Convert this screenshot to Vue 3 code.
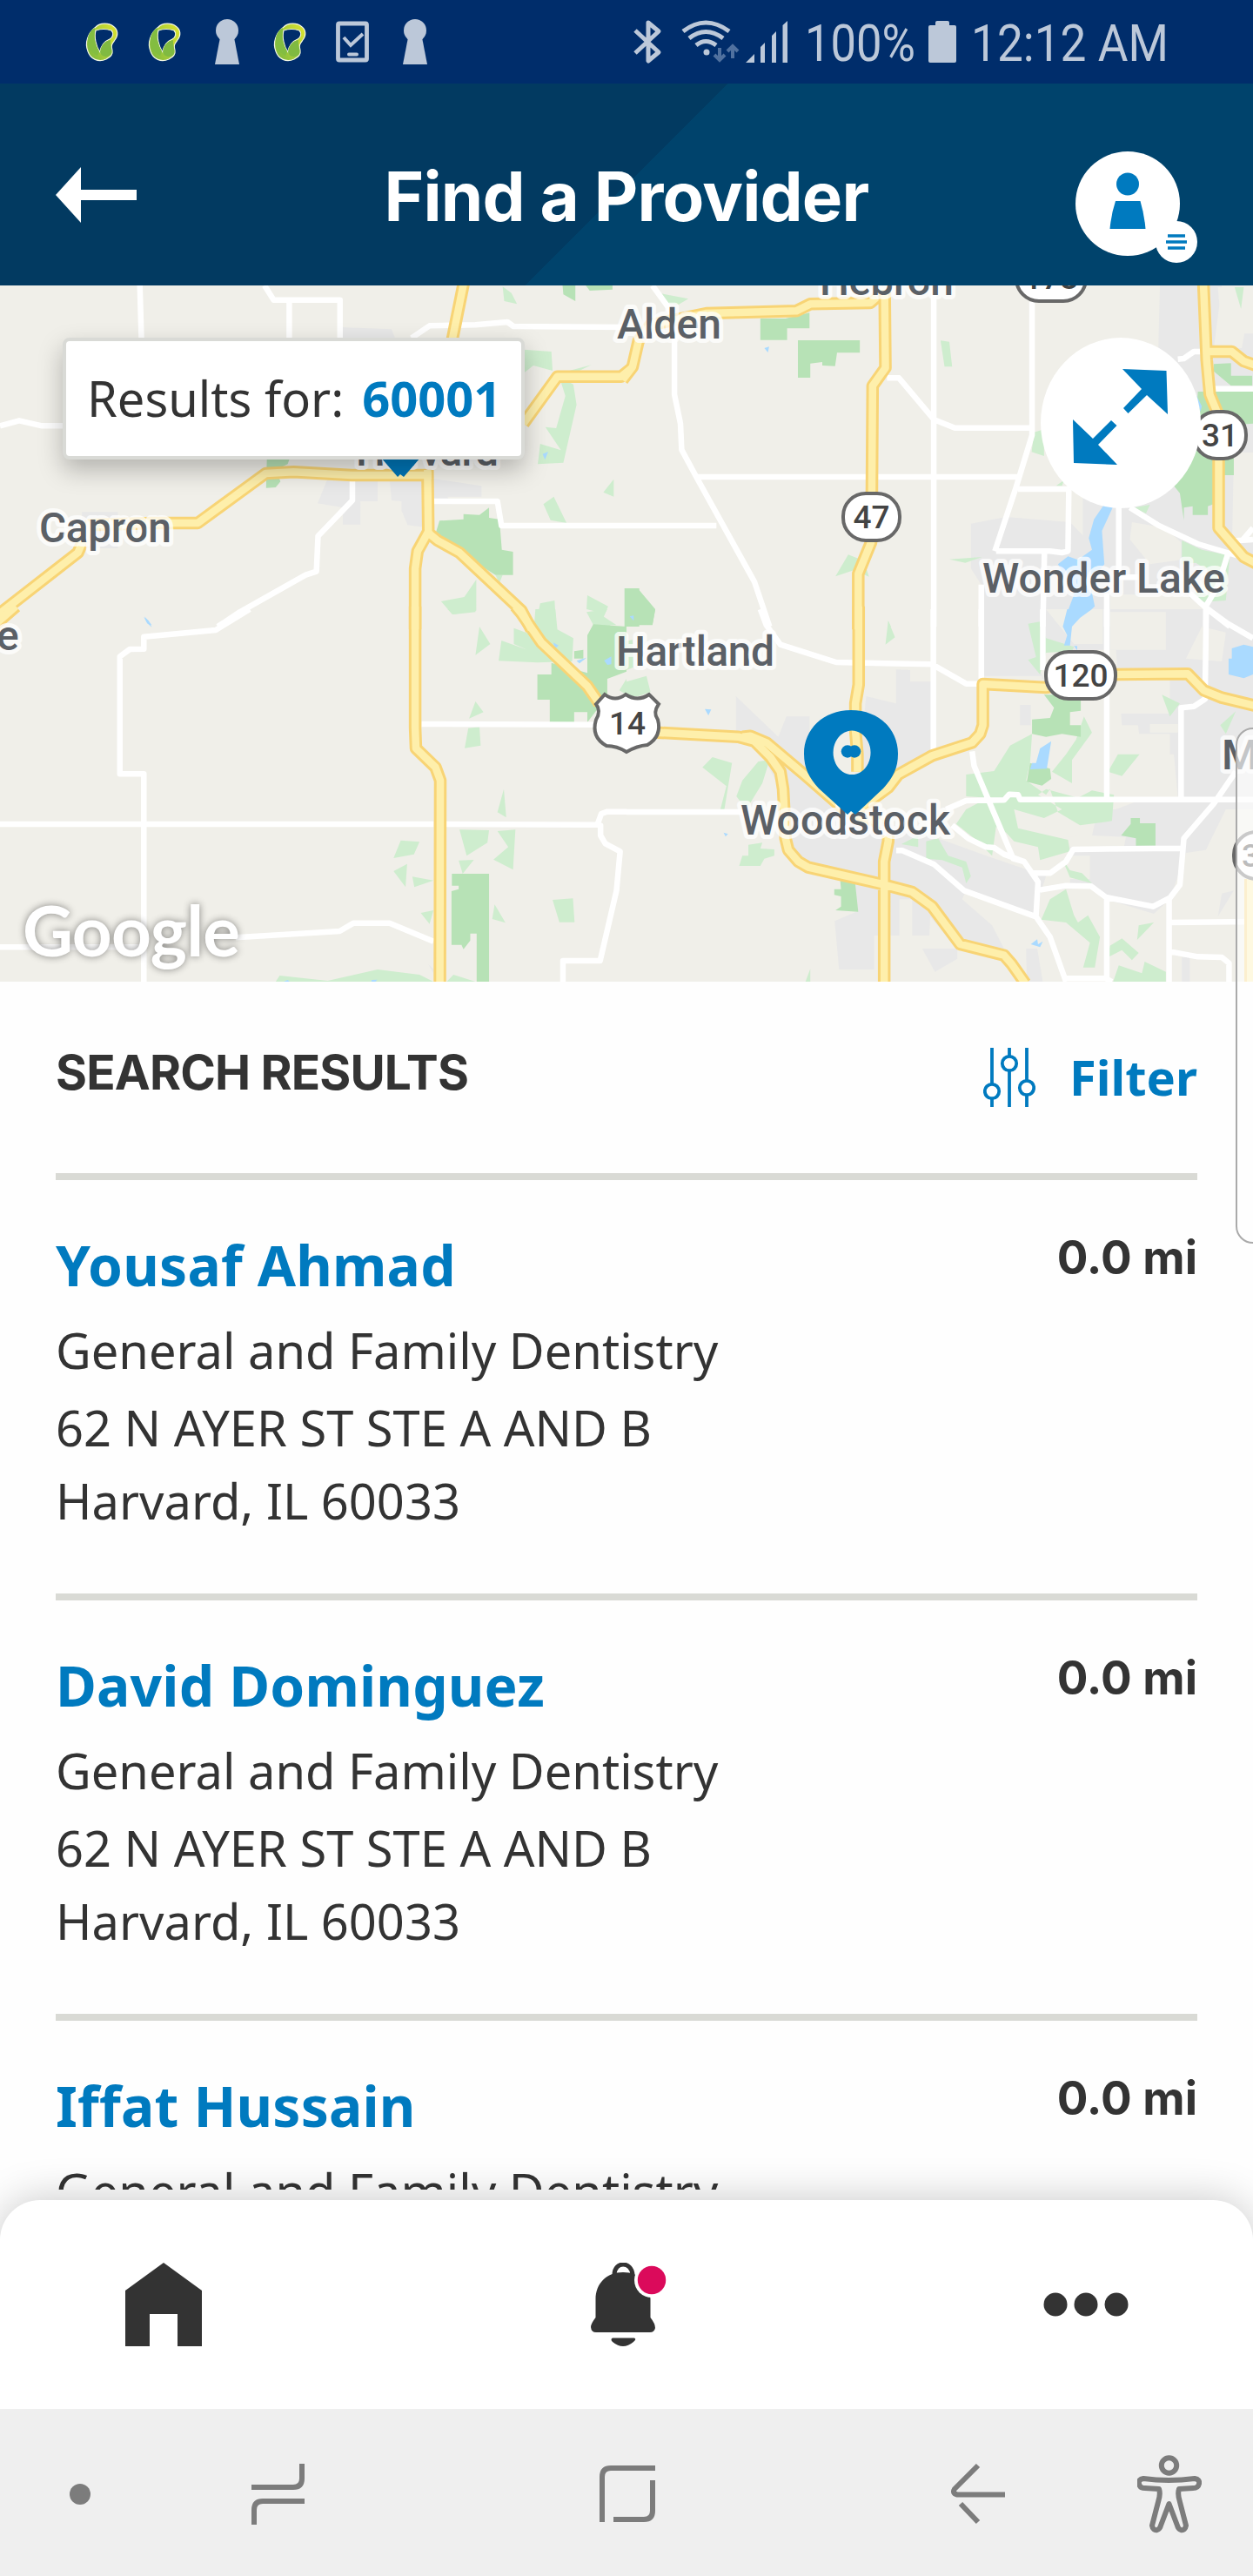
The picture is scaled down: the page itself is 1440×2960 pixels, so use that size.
<script setup>
const providers = [
  { name: 'Yousaf Ahmad', specialty: 'General and Family Dentistry', street: '62 N AYER ST STE A AND B', city: 'Harvard, IL 60033', distance: '0.0 mi' },
  { name: 'David Dominguez', specialty: 'General and Family Dentistry', street: '62 N AYER ST STE A AND B', city: 'Harvard, IL 60033', distance: '0.0 mi' },
  { name: 'Iffat Hussain', specialty: 'General and Family Dentistry', street: '62 N AYER ST STE A AND B', city: 'Harvard, IL 60033', distance: '0.0 mi' },
]

const statusIcons = ['leaf', 'leaf', 'keyhole', 'leaf', 'phone', 'keyhole']

// Each tile keeps its own coordinate space and is scaled into the map.
const tile = (x, y) => `translate(${x} ${y}) scale(0.45918 0.33333)`

const tiles = [
  {
    at: tile(0, 320),
    urban: 'M855 168L980 175L990 210L855 210ZM820 690L945 690V768H902V848H858V790L795 775ZM975 690H1085L1205 715V752L1120 752L1130 778H1085L1065 858L1020 850L1005 800V768L980 765ZM205 805H295V930H205Z',
    park: 'M1408 24H1440V78L1410 55ZM1466 24H1533V38L1476 42ZM668 620H725L720 640L690 660L702 700L690 720L666 722ZM1100 835L1160 830V812L1200 815L1224 790V825L1250 830L1256 935L1284 942V1022H1240L1180 970L1140 920L1090 880ZM1563 1068H1600V1200H1563Z',
    light: 'M1258 28L1280 50L1294 88L1262 78ZM1310 245L1380 252L1383 318L1335 300L1312 325ZM1400 340L1435 365L1443 435L1410 635L1346 640L1352 570L1404 592L1365 512L1392 516L1415 405ZM1425 318L1480 298L1440 325ZM1386 752L1418 843L1378 833L1360 778ZM1536 692V752L1510 737ZM1104 1113L1162 1098L1192 1038V1145L1132 1158ZM1240 1022H1258L1250 1050ZM1352 1120L1388 1110L1392 1200H1340ZM1470 1092L1522 1130L1510 1170L1530 1200H1490L1496 1150L1468 1140ZM1162 890L1190 893V935L1162 930ZM1193 953H1224V978H1193Z',
    water: 'M1358 605L1372 597L1364 625ZM362 1165L380 1195L370 1190Z',
    minor: 'M350 24L354 210M662 24L685 74H851V210M724 74V210M1030 205L1075 163L1190 160L1270 150L1285 165L1568 168M0 508L48 490L105 508H160M882 695V765L796 888L792 1010L765 1022L600 1150L545 1200M1075 768H1245L1255 852H1568',
    major: 'M1160 20L1132 210M-10 1165L195 945L225 850L380 843H495L665 672L735 667L880 678H1080M1070 660L1072 870M1075 865L1045 940L1039 1000V1210M1070 875L1095 903L1150 945L1305 1145L1330 1210M1310 500L1395 338H1555L1580 310',
  },
  {
    at: tile(720, 320),
    urban: 'M1335 24H1568V900H1362L1330 700V300ZM862 845L950 822L1110 840L1142 885V750L1180 735H1568V1200H890V1060L862 1000Z',
    plain: 'M1490 24H1568L1540 240H1470ZM1520 600H1568V900H1516ZM1265 840L1350 860L1388 910V970L1310 985L1260 900ZM1210 1090L1400 1090L1450 1140V1200H1210ZM1480 30H1568V190H1490Z',
    park: 'M335 138H398L458 118V172H402V212H335ZM429 213H584V256H527L522 302L490 300V288L460 293V342H429ZM1470 295L1513 292V335H1566V370H1513L1470 320ZM1430 390H1568V500L1520 505V678H1480L1475 775L1455 785V815H1417V785L1395 790V833L1385 740L1370 715L1420 600ZM0 1068H28L72 1140L65 1195H0Z',
    light: 'M65 24L80 50L155 70L130 90L95 85ZM786 214L808 218L815 304H796ZM1020 530L1045 520V612L1014 598ZM555 952L580 965L600 1000L607 1028L570 1005L523 1027ZM808 968L890 960L848 980ZM1390 903L1440 935L1510 955L1500 1110L1445 1115L1410 1100L1470 1020L1425 980L1390 985ZM1522 30H1545L1538 105ZM1505 390L1525 480L1505 430ZM1270 790L1310 780L1300 810ZM1075 715L1095 695L1090 715ZM655 1180L662 1200H655ZM1010 1190L1035 1183V1200H1010Z',
    water: 'M345 240L357 235L354 255ZM1195 780H1220L1190 870L1196 985L1160 1050L1172 1130L1120 1200H1090L1120 1090L1080 985L1105 958L1130 970L1165 935L1157 895L1170 830ZM1425 400L1440 440L1436 460Z',
    minor: 'M65 24L105 100L120 150V400L135 500L138 590L175 685L320 1045L358 1200M175 684H980M0 852H225M652 343H682L770 487L822 515H1015M769 24V1200M1015 80V540L975 720L922 940M980 726H1110M1107 726L1105 940L1090 945L1060 940H925M1046 945L1042 1200M888 1055V1200M1202 1085V1200M1232 780V1030H1280M1260 790L1330 850L1430 915L1540 960M1380 278L1395 276L1420 252H1450M1470 380H1568M1568 860L1540 905M1505 950L1480 1060L1450 1130M1410 1085L1450 1135L1510 1200M1450 1135V1200M1568 900L1510 905',
    major: 'M-10 350L15 305L30 215L60 160L200 120L425 112L460 88L610 84L625 66M646 40L648 308L616 370L614 740L612 910L580 1018V1210M1444 20L1452 280L1460 400L1478 460L1482 600V860L1545 960L1580 985M1455 252H1515L1545 285L1580 302',
  },
  {
    at: tile(0, 700),
    urban: 'M1072 1225L1085 1240V1255Z',
    park: 'M1485 52L1568 60V215L1520 240V300L1470 390V355H1437V390H1376V312H1345V225H1380V185L1470 220V90ZM1437 145L1460 140V170H1437ZM1131 912H1224V1284H1193V1118H1177V1142L1160 1172L1155 1157H1130V972L1148 965V953H1131Z',
    light: 'M1120 0H1190V10L1135 18ZM1340 0H1390L1395 70L1435 100L1432 180L1345 184L1248 178L1255 108L1320 140L1286 120V65L1335 90ZM1200 60L1227 120L1190 158ZM1190 318L1210 355L1174 377ZM1172 410L1200 406L1203 470L1163 479ZM1261 620L1267 718L1245 700ZM1150 760L1224 762L1220 805L1168 850ZM1245 765L1290 760L1284 898L1235 863L1272 820ZM1148 866L1186 864L1158 912ZM1003 797L1050 802L1036 845L985 858ZM1019 878L1015 958L985 903ZM1032 922L1085 935L1037 958ZM1053 1047L1085 1038L1075 1085ZM1238 1018L1265 1081L1232 1068ZM1383 1002L1434 997L1438 1079H1400ZM690 1284L700 1263L820 1281L945 1242L1050 1260L1085 1284ZM1118 1284L1135 1260L1190 1284ZM1468 10L1520 0L1510 25L1543 55H1485ZM1550 280L1568 240V295ZM1193 948L1224 940V965H1193Z',
    water: 'M360 27L372 40L380 62L368 48ZM1385 115L1398 125L1388 138ZM1443 178L1468 167L1450 187ZM1512 177L1530 163V190L1520 192ZM710 1284L720 1278L725 1284ZM930 1284V1278L944 1277L940 1284Z',
    minor: 'M625 0L540 72L360 95V137L325 138L300 163V568H360V1284M0 741H1085M1115 741L1495 743L1505 705L1520 698H1568M1495 743L1503 745V780L1515 808L1552 835L1543 970L1502 1212H1409V1284M0 1165H360M590 1132L850 1110L885 1082H975L1085 1145M1055 396L1510 398',
    major: 'M1039 -10V410L1041 480L1090 545L1102 590L1101 1290M1290 -10L1305 15L1355 115L1470 265L1500 325M-10 50L40 -10',
  },
  {
    at: tile(720, 700),
    urban: 'M890 0H1568V690H1500L1450 830L1400 840L1360 1000L1320 1050L1200 1000L1165 950H1110V820H1245L1250 785L1165 780L1180 690H1225L1300 650H1380L1370 500H1290L1280 400H1240L1225 140H1030V200L1045 240H890ZM675 208L710 210V250H765V515L680 550H580L600 300L675 325ZM274 300L380 440L400 370H458V440L480 600L560 700L780 790L900 850L1050 920L1020 1050L850 970L840 1000L915 1090L945 1170L870 1180L820 1160L760 1060L758 1125H715V1000H683V1125H620V1242H532L521 1075L580 1040L540 930L400 840L385 620L330 480L274 430ZM740 1170H828V1205L772 1250ZM985 330H1012V400H985ZM1000 1170H1028L1042 1284H1002ZM1390 1200H1410V1284H1390ZM1490 980L1520 970L1480 1060Z',
    plain: 'M895 230H1040V290H895ZM1050 0H1192V120H1120ZM1210 10H1350V140H1210ZM1440 60L1500 80L1490 180L1400 170ZM1205 240H1360V360H1205ZM1310 396H1380V425H1310ZM1240 430H1360V560H1240ZM930 680H1000V760L930 790ZM1020 720L1070 700L1160 740L1140 780L1080 790ZM1090 850H1160V930H1100ZM1090 450L1130 420L1130 450L1080 490Z',
    park: 'M0 0H72L65 52L0 55ZM1045 295H1137V350L1110 355V400H1137V440L1090 430L1050 440L1015 430V380L1060 375L1070 340ZM1010 530L1060 550L1063 585L1040 608L1002 595ZM1262 740V720H1285V738H1324V815H1275V790L1238 780ZM535 937L572 940L580 1043L523 1038L537 1025V990L520 985V965H537Z',
    light: 'M655 40L672 97L648 122ZM0 250L50 230L60 285L30 300H0ZM1005 50L1038 42L1050 100L1120 130L1115 145L1050 150L1035 225L1005 175L1025 165ZM0 110L15 105L18 200L0 210ZM215 510L264 530L245 690H235L250 610L190 545ZM330 525L358 520L340 600L300 690L275 645L290 590ZM1340 295L1385 325L1360 370ZM1525 352L1500 430L1486 400ZM850 570L920 558L960 470L1015 430L1010 530L1000 590L1050 640L1060 620L1080 700L1135 745L1190 735L1215 730L1220 640L1165 625L1130 650L1050 620L1030 640L1090 690L1045 720L970 690L980 755L1105 795L1110 835L1035 865L1030 820L970 800L950 770L925 750L915 850L870 790L825 740L850 690L905 650L850 645ZM1145 370L1165 425L1115 520V600L1065 560L1100 500L1125 450ZM1230 500L1284 500L1240 575L1205 560ZM688 810L730 780V820ZM750 800L780 790L805 850L850 870L862 920L850 945L840 890L790 865L750 860ZM305 812L340 805L335 825L370 828V850L345 860L335 885L282 885L290 850H305ZM1090 860L1110 900L1140 910L1165 945L1110 925ZM1100 965L1120 1055L1130 1080L1155 1055L1185 1130L1172 1235H1143L1160 1150L1100 1080L1038 1070L1060 1000ZM1282 1090L1320 1080L1278 1140ZM1240 1135L1282 1185L1265 1210L1240 1175L1205 1200L1210 1160ZM1232 1228L1290 1255L1297 1215L1350 1250V1284H1218ZM460 1240V1284H448Z',
    water: 'M1103 0H1165L1135 30L1115 60L1110 125H1095L1103 90L1092 60ZM1120 127H1128V142ZM1515 135L1545 122L1568 130V225L1545 238L1507 225V170H1515ZM1035 480L1063 455L1052 550L1010 552L1015 530H1025ZM196 344L212 346L205 366ZM243 770L254 775L248 784ZM1012 1155L1028 1138L1030 1155L1042 1145L1035 1165ZM8 25L18 22V40Z',
    minor: 'M335 0L350 55L385 122L525 183L765 190L850 257H885M768 0V500M888 0V250M1042 0V210M1202 0V655M1455 0L1505 50L1568 100M1451 0L1448 310L1420 335L1388 340V650M800 690L850 660L945 658L958 638L980 640L985 656H1568M865 490L870 540L968 860L995 870L1030 940L1025 1055M815 745L855 790L900 820L920 822L945 845L995 870M675 832H690L770 880L845 970L1025 1060L1060 1130L1100 1284M1015 910H1060L1100 870L1118 828L1390 824M1525 560L1470 670L1395 790L1385 950L1360 995L1318 1025L1200 993L1163 955L1100 953L1035 968M1202 995V1280M1358 990V1284M1360 1080L1568 1077M1360 1180L1430 1198L1490 1200L1508 1220V1284M0 699H300M1095 1272L1200 1273L1215 1284',
    major: 'M581 -10V260L573 325V420L578 500V560M75 425L280 440L320 455L360 510L385 560L392 620L395 700L398 790L405 830L430 870L455 890L640 948L715 975L765 1025L835 1155L945 1193L965 1225L998 1290M290 440L310 437L350 460L445 570L545 690L640 740M560 710L655 615L680 570L765 505L865 460L885 430L892 400V258L1050 270L1060 268M1225 225L1405 223L1445 280L1490 305L1580 335M655 780V800L645 870V1290M1562 930V1290',
  },
]

const labels = [
  { t: 'Capron', x: 45, y: 623, w: 152 },
  { t: 'Harvard', x: 409, y: 535, w: 164 },
  { t: 'Alden', x: 709, y: 389, w: 120 },
  { t: 'Hebron', x: 942, y: 339, w: 154 },
  { t: 'Wonder Lake', x: 1129, y: 681, w: 279 },
  { t: 'Hartland', x: 708, y: 765, w: 182 },
  { t: 'Woodstock', x: 851, y: 959, w: 241 },
  { t: 'e', x: -4, y: 747, w: 25 },
  { t: 'M', x: 1404, y: 884, w: 38 },
]

const shields = [
  { t: '47', x: 969, y: 567, w: 65 },
  { t: '120', x: 1202, y: 749, w: 80 },
  { t: '31', x: 1372, y: 473, w: 60 },
  { t: '173', x: 1168, y: 292, w: 80 },
  { t: '31', x: 1418, y: 956, w: 60 },
]
</script>

<template>
  <div class="screen">
    <header class="status">
      <div class="status-left">
        <template v-for="(icon, i) in statusIcons" :key="i">
          <svg v-if="icon === 'leaf'" width="72" height="96" viewBox="0 0 72 96">
            <defs>
              <linearGradient id="leaf" x1="1" y1="0" x2="0" y2="0.6">
                <stop offset="0" stop-color="#dfe52f" />
                <stop offset="1" stop-color="#86bd3d" />
              </linearGradient>
            </defs>
            <path d="M29 31C34 26 44 26 49 30C55 34 55 41 51 46C48 50 46 52 48 58C49 63 45 66 41 68C32 72 23 68 20 59C16 49 20 38 29 31ZM29 35C27 42 29 53 34 60C35 51 40 47 45 45C49 43 50 38 47 35Q38 32 29 35Z" fill="url(#leaf)" fill-rule="evenodd" stroke="#f4f8e4" stroke-width="1.2" />
            <path d="M34 60C35 51 40 47 46 46C45 52 49 57 47 62C43 67 36 66 34 60Z" fill="#80ba41" />
            <path d="M20 43Q22 35 28 32L28 36Q26 47 33 59L31 64Q18 58 20 43Z" fill="#83bd41" />
          </svg>
          <svg v-else-if="icon === 'keyhole'" width="72" height="96" viewBox="0 0 72 96" fill="#bcc8d9">
            <circle cx="36" cy="35" r="13" />
            <path d="M28 43H44L50 74H22Z" />
          </svg>
          <svg v-else width="72" height="96" viewBox="0 0 72 96" fill="none" stroke="#bcc8d9">
            <rect x="19.500" y="27" width="33" height="42" rx="1.500" stroke-width="4.800" />
            <path d="M26 43L34 52L48 39" stroke-width="4" />
            <path d="M32 62.500H41" stroke-width="4" stroke-linecap="round" />
          </svg>
        </template>
      </div>
      <div class="status-right">
        <svg width="54" height="96" viewBox="720 0 54 96" fill="none" stroke="#bcc8d9" stroke-width="5" stroke-linejoin="round">
          <path d="M730 35L757 60L745 70V26L757 36L730 61" />
        </svg>
        <svg width="78" height="96" viewBox="774 0 78 96" fill="none" stroke="#bcc8d9" stroke-width="5">
          <path d="M785 36Q811 16 838 36M792 44Q811 29 831 44M800 52Q811 43 823 52" />
          <circle cx="812" cy="60" r="3.500" fill="#bcc8d9" stroke="none" />
          <path d="M827 55V69M821 63L827 69L833 63M842 67V53M836 59L842 53L848 59" stroke="#50719f" stroke-width="4" />
        </svg>
        <svg width="73" height="96" viewBox="852 0 73 96" fill="#bcc8d9">
          <path d="M857 72L867 62V72ZM874 72V54L879 49V72ZM887 72V41L892 36V72ZM899.500 72V29L905 24V72Z" />
        </svg>
        <span class="battery-text">100%</span>
        <svg class="battery" width="32" height="96" viewBox="0 0 32 96" fill="#bcc8d9">
          <rect x="8" y="24" width="16" height="10" rx="2" />
          <rect y="29" width="32" height="43" rx="2" />
        </svg>
        <span class="clock">12:12 AM</span>
      </div>
    </header>

    <div class="appbar">
      <svg class="back" width="93" height="64" viewBox="0 0 93 64" fill="#fff">
        <path d="M0 32L29 0V26H93V38H29V64Z" />
      </svg>
      <h1>Find a Provider</h1>
      <svg class="avatar" width="140" height="128" viewBox="1236 174 140 128">
        <circle cx="1296" cy="234" r="60" fill="#fff" />
        <circle cx="1352" cy="278" r="24" fill="#fff" />
        <circle cx="1296" cy="211.500" r="13" fill="#007abf" />
        <path d="M1282 231H1310.500Q1315 246 1316.500 263H1275.500Q1277 246 1282 231Z" fill="#007abf" />
        <path d="M1342 271H1362M1340 278H1364M1342 285H1362" stroke="#007abf" stroke-width="3.600" />
      </svg>
    </div>

    <section class="map">
      <svg class="map-canvas" width="1440" height="800" viewBox="0 328 1440 800">
        <rect y="328" width="1440" height="800" fill="#f0efe9" />
        <g v-for="(m, i) in tiles" :key="'l' + i" :transform="m.at">
          <path :d="m.urban" fill="#e8e8e8" />
          <path v-if="m.plain" :d="m.plain" fill="#f0efe9" />
          <path :d="m.light" fill="#ceedce" />
          <path :d="m.park" fill="#b7e2b6" />
          <path :d="m.water" fill="#aadaff" />
        </g>
        <g v-for="(m, i) in tiles" :key="'m' + i" :transform="m.at">
          <path :d="m.minor" class="road minor" />
        </g>
        <g v-for="(m, i) in tiles" :key="'c' + i" :transform="m.at">
          <path :d="m.major" class="road casing" />
        </g>
        <g v-for="(m, i) in tiles" :key="'f' + i" :transform="m.at">
          <path :d="m.major" class="road major" />
        </g>

        <g v-for="(s, i) in shields" :key="'s' + i">
          <rect :x="s.x" :y="s.y" :width="s.w" height="54" rx="26" fill="#fff" stroke="#686868" stroke-width="4" />
          <text :x="s.x + s.w / 2" :y="s.y + 39.500" class="shield">{{ s.t }}</text>
        </g>
        <path d="M695 798Q707 807 719 798Q733 807 746 798L757 809Q750 819 756 827Q761 846 744 856Q732 857 720 864Q709 857 697 857Q679 847 685 827Q691 817 685 809Z" fill="#fff" stroke="#686868" stroke-width="4" />
        <text x="721" y="844" class="shield">14</text>

        <text v-for="(l, i) in labels" :key="'t' + i" :x="l.x" :y="l.y" :textLength="l.w" class="place">{{ l.t }}</text>
        <text x="26" y="1099" textLength="250" class="google">Google</text>

        <path d="M978 816C1010 816 1032 838 1032 866C1032 883 1026 894 1015 906L983 936L978 932L974 936L941 906C930 894 924 883 924 866C924 838 946 816 978 816ZM979 839.500A21.500 25.300 0 1 0 979.100 839.500Z" fill="#007abf" fill-rule="evenodd" />
        <ellipse cx="974" cy="863.500" rx="7.300" ry="7.200" fill="#007abf" />
        <ellipse cx="982" cy="863.500" rx="7.300" ry="7.200" fill="#007abf" />
        <path d="M438 526H483L464 548L460 545L457 548Z" fill="#0075b6" />
      </svg>

      <div class="bubble"><span>Results for:</span><strong>60001</strong></div>
      <div class="expand">
        <svg width="184" height="196" viewBox="1196 388 184 196" fill="#007abf">
          <path d="M1290 424L1340.500 426L1342 476L1318 454L1296.500 475L1291 469L1312 447Z" />
          <path d="M1233 482L1256 504L1277 483L1283.500 489L1262 511L1284 534L1234 532Z" />
        </svg>
      </div>
    </section>

    <main class="results">
      <div class="results-head">
        <h2>SEARCH RESULTS</h2>
        <div class="filter">
          <svg width="60" height="68" viewBox="0 0 60 68" fill="none" stroke="#007abf" stroke-width="3.800">
            <path d="M10 0V41M10 59V68M30 0V9M30 27V68M50 0V37M50 55V68" />
            <circle cx="10" cy="50" r="8.200" />
            <circle cx="30" cy="18" r="8.200" />
            <circle cx="50" cy="46" r="8.200" />
          </svg>
          <span>Filter</span>
        </div>
      </div>
      <article v-for="p in providers" :key="p.name" class="provider">
        <div>
          <h3>{{ p.name }}</h3>
          <p class="specialty">{{ p.specialty }}</p>
          <p>{{ p.street }}</p>
          <p>{{ p.city }}</p>
        </div>
        <span class="distance">{{ p.distance }}</span>
      </article>
    </main>

    <nav class="tabs">
      <svg width="88" height="96" viewBox="0 0 88 96" fill="#333">
        <path d="M44 0L88 32V96H60V59H28V96H0V32Z" />
      </svg>
      <svg class="bell" width="88" height="96" viewBox="679 2600 88 96" fill="#333">
        <path d="M706 2614C706 2598 726 2598 727 2614" fill="none" stroke="#333" stroke-width="5" />
        <path d="M716 2611C735 2611 747.500 2624 747.500 2642V2663Q753 2670 753 2675Q752 2680 747 2680H685Q679.500 2680 679 2674Q679 2670 684.500 2663V2642C684.500 2624 697 2611 716 2611Z" />
        <path d="M704 2686.500H729Q732 2688 728 2691Q716 2701 704 2691Q701 2688 704 2686.500Z" />
        <circle cx="749" cy="2620" r="20" fill="#fff" />
        <circle cx="749" cy="2620" r="16.200" fill="#db0a5b" />
      </svg>
      <svg width="98" height="28" viewBox="0 0 98 28" fill="#333">
        <circle cx="14" cy="14" r="13.500" />
        <circle cx="49" cy="14" r="13.500" />
        <circle cx="84" cy="14" r="13.500" />
      </svg>
    </nav>

    <footer class="system">
      <svg width="24" height="96" viewBox="80 2818 24 96"><circle cx="92" cy="2866" r="12" fill="#7c7c7c" /></svg>
      <svg class="recents" width="62" height="96" viewBox="289 2818 62 96"><path d="M289 2858H337Q347 2858 347 2848V2831M350 2874H302Q292 2874 292 2884V2901" /></svg>
      <svg class="home" width="64" height="96" viewBox="689 2818 64 96"><path d="M692 2898V2846Q692 2836 702 2836H753M750 2850V2885Q750 2895 740 2895H705" /></svg>
      <svg class="return" width="62" height="96" viewBox="1093 2818 62 96"><path d="M1155 2866.500H1100Q1094 2865 1097 2860L1124 2833M1104 2877L1124 2898" /></svg>
      <svg class="person" width="74" height="96" viewBox="1307 2818 74 96" stroke-linejoin="round">
        <circle cx="1343.500" cy="2833" r="8.700" />
        <path d="M1314 2848Q1343 2852 1373 2848Q1379 2849 1378 2854Q1377 2859 1371 2859L1355 2860Q1353 2866 1356 2875L1363 2902Q1362 2908 1357 2907Q1354 2906 1353 2902L1343.500 2877L1334 2902Q1333 2906 1330 2907Q1325 2908 1324 2902L1331 2875Q1334 2866 1332 2860L1316 2859Q1310 2859 1309 2854Q1308 2849 1314 2848Z" />
      </svg>
    </footer>

    <div class="edge-panel"></div>
  </div>
</template>

<style>
body {
  margin: 0;
}
</style>

<style scoped>
.screen {
  position: relative;
  display: flex;
  flex-direction: column;
  width: 1440px;
  height: 2960px;
  overflow: hidden;
  background: #fefefe;
  color: #333;
  font-family: "Noto Sans", sans-serif;
}
svg {
  display: block;
  flex: none;
}
h1, h2, h3, p {
  margin: 0;
}
.status {
  display: flex;
  flex: none;
  height: 96px;
  background: #002d6b;
  color: #bcc8d9;
  font: 400 60px/96px Roboto, sans-serif;
  white-space: nowrap;
}
.status-left {
  display: flex;
  width: 639px;
  padding-left: 81px;
}
.status-right {
  display: flex;
}
.battery-text {
  width: 128px;
  padding-top: 2px;
  transform: scaleX(0.875);
  transform-origin: 0 0;
}
.battery {
  margin: 0 17px 0 14px;
}
.clock {
  padding-top: 2px;
  transform: scaleX(0.887);
  transform-origin: 0 0;
}
.appbar {
  display: flex;
  flex: none;
  height: 232px;
  padding: 0 64px;
  background: linear-gradient(135.200deg, #023a61 0 50%, #00436c 50%);
}
.back {
  margin-top: 96px;
}
h1 {
  flex: 1;
  padding: 82px 0 0 47px;
  text-align: center;
  color: #fff;
  font: 700 78px/96px Inter, sans-serif;
  letter-spacing: -0.8px;
  white-space: nowrap;
}
.avatar {
  margin-top: 78px;
}
.map {
  position: relative;
  flex: none;
  height: 800px;
  overflow: hidden;
}
.road {
  fill: none;
  stroke-linejoin: round;
  vector-effect: non-scaling-stroke;
}
.minor {
  stroke: #fff;
  stroke-width: 6.5px;
}
.casing {
  stroke: #f8d475;
  stroke-width: 14.5px;
}
.major {
  stroke: #feefab;
  stroke-width: 8.5px;
}
.shield {
  fill: #444;
  font: 500 37px Roboto, sans-serif;
  text-anchor: middle;
}
.place {
  fill: #5b6066;
  stroke: #fff;
  stroke-opacity: 0.75;
  stroke-width: 10px;
  stroke-linejoin: round;
  paint-order: stroke;
  font: 500 48px Roboto, sans-serif;
}
.google {
  fill: #fff;
  font: 700 80px Lato, sans-serif;
  filter: drop-shadow(0 0 4px rgba(0, 0, 0, 0.45));
}
.bubble {
  position: absolute;
  left: 72px;
  top: 60px;
  box-sizing: border-box;
  display: flex;
  gap: 21px;
  width: 531px;
  height: 140px;
  padding: 19px 24px;
  border: 4px solid #d9dad6;
  border-radius: 8px;
  background: #fff;
  box-shadow: 0 12px 28px rgba(0, 0, 0, 0.25);
  font-size: 56px;
  line-height: 92px;
  white-space: nowrap;
}
.bubble strong {
  color: #007abf;
}
.expand {
  position: absolute;
  left: 1196px;
  top: 60px;
  border-radius: 50%;
  background: #fff;
}
.results {
  height: 1388px;
  flex: none;
  overflow: hidden;
  padding: 0 64px;
}
.results-head {
  display: flex;
  justify-content: space-between;
  height: 220px;
}
h2 {
  padding-top: 70px;
  font: 700 55px/68px Inter, sans-serif;
  letter-spacing: -0.85px;
}
.filter {
  display: flex;
  gap: 39px;
  padding-top: 76px;
  color: #007abf;
  font-size: 56px;
  font-weight: 700;
  line-height: 66px;
}
.provider {
  display: flex;
  justify-content: space-between;
  box-sizing: border-box;
  height: 483px;
  border-top: 8px solid #d9dad5;
}
h3 {
  padding-top: 54px;
  color: #007abf;
  font-size: 64px;
  font-weight: 700;
  line-height: 88px;
  letter-spacing: 0.2px;
}
p {
  font-size: 56px;
  line-height: 84px;
  white-space: nowrap;
}
.specialty {
  margin: 11px 0 5px;
}
.distance {
  padding-top: 55px;
  font: 700 53px/68px Inter, sans-serif;
}
.tabs {
  position: relative;
  display: flex;
  flex: none;
  align-items: center;
  justify-content: space-between;
  box-sizing: border-box;
  height: 240px;
  margin-top: 12px;
  padding: 0 143px 0 144px;
  border-radius: 46px 46px 0 0;
  background: #fff;
  box-shadow: 0 0 48px rgba(0, 0, 0, 0.22);
}
.bell {
  margin-left: 15px;
}
.system {
  position: relative;
  display: flex;
  flex: none;
  align-items: center;
  box-sizing: border-box;
  height: 192px;
  padding: 4px 0 0 80px;
  background: #efefef;
}
.system path, .person circle {
  fill: none;
  stroke: #7c7c7c;
  stroke-width: 6px;
}
.recents {
  margin-left: 185px;
}
.home {
  margin-left: 338px;
}
.return {
  margin-left: 340px;
}
.person {
  margin-left: 152px;
}
.edge-panel {
  position: absolute;
  left: 1420px;
  top: 836px;
  box-sizing: border-box;
  width: 40px;
  height: 593px;
  border: 2px solid #aaa;
  border-radius: 20px;
  background: rgba(253, 253, 253, 0.65);
}
</style>
